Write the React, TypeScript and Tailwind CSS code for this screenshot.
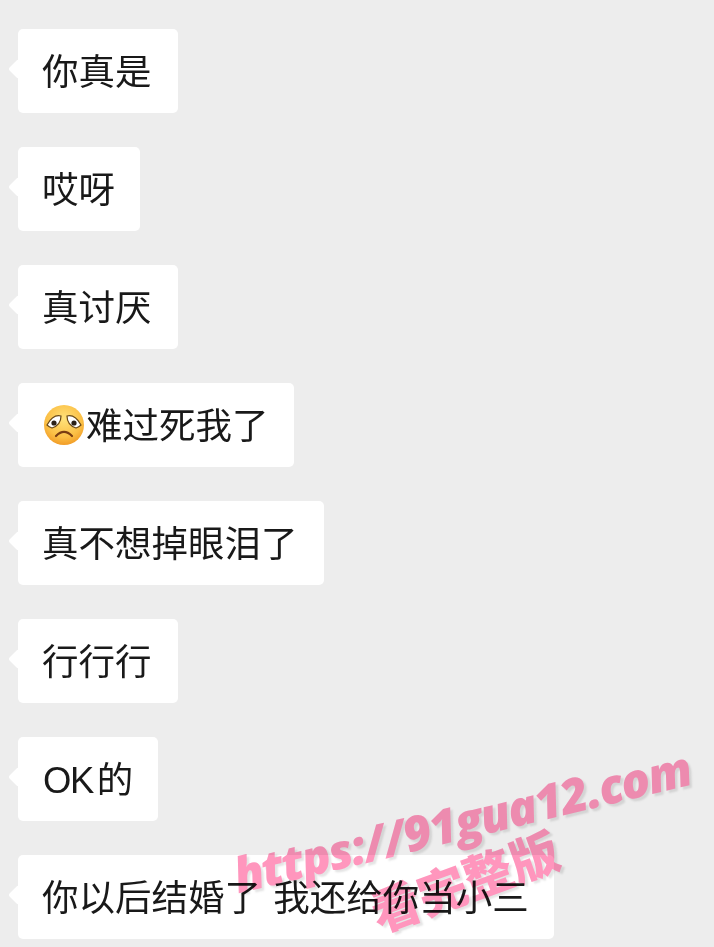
const rows: { w: string; text: string; emoji?: boolean }[] = [
  { w: "w-[160px]", text: "你真是" },
  { w: "w-[122px]", text: "哎呀" },
  { w: "w-[160px]", text: "真讨厌" },
  { w: "w-[276px]", text: "难过死我了", emoji: true },
  { w: "w-[306px]", text: "真不想掉眼泪了" },
  { w: "w-[160px]", text: "行行行" },
  { w: "w-[140px]", text: "OK 的" },
  { w: "w-[536px]", text: "你以后结婚了 我还给你当小三" },
];

function Sad() {
  return (
    <svg width="42" height="42" viewBox="0 0 42 42" className="shrink-0 ml-[1px] mr-[1px] -translate-y-[2px]">
      <defs>
        <radialGradient id="f" cx="50%" cy="35%" r="70%">
          <stop offset="0%" stopColor="#ffe27a" />
          <stop offset="65%" stopColor="#fbbf45" />
          <stop offset="100%" stopColor="#ef9420" />
        </radialGradient>
      </defs>
      <circle cx="21" cy="21" r="20" fill="url(#f)" />
      <path d="M4 21 Q10 10 18 12 Q18 21 9 24 Q6 23 4 21Z" fill="#fff" stroke="#6b4a18" strokeWidth="1.2" />
      <path d="M38 21 Q32 10 24 12 Q24 21 33 24 Q36 23 38 21Z" fill="#fff" stroke="#6b4a18" strokeWidth="1.2" />
      <circle cx="11" cy="19" r="2.6" fill="#2b2118" />
      <circle cx="31" cy="19" r="2.6" fill="#2b2118" />
      <path d="M13 32 Q21 24 29 32" fill="none" stroke="#7a3d12" strokeWidth="2.2" strokeLinecap="round" />
    </svg>
  );
}

export default function App() {
  return (
    <div className="relative w-[714px] h-[947px] overflow-hidden bg-[#ededed] pt-[29px] pl-[18px] flex flex-col gap-[34px] font-['Liberation_Sans','Noto_Sans_CJK_SC',sans-serif] text-[#191919]">
      {rows.map((r, i) => (
        <div
          key={i}
          className={`relative ${r.w} h-[84px] shrink-0 bg-white rounded-[5px] flex items-center pl-[24px] pt-[4px] text-[36.5px] leading-none`}
        >
          <div className="absolute left-[-7px] top-[33px] w-[14px] h-[14px] bg-white rotate-45 rounded-[2px]" />
          <span className="relative flex items-center whitespace-pre [word-spacing:2px]">
            {r.emoji && <Sad />}
            {r.text === "OK 的" ? (
              <>
                <span className="tracking-[-1.5px] ml-[1px]">OK</span>
                <span className="ml-[4px]">的</span>
              </>
            ) : (
              r.text
            )}
          </span>
        </div>
      ))}
      <div className="absolute left-[234px] top-[852px] rotate-[-13.5deg] origin-left text-[48px] tracking-[-1.5px] leading-none font-extrabold italic whitespace-nowrap text-[#ff96bd] mix-blend-multiply font-['Open_Sans',sans-serif] [text-shadow:2px_3px_2px_rgba(120,120,120,0.2)]">
        https://91gua12.com
      </div>
      <div className="absolute left-[372px] top-[888px] rotate-[-20deg] origin-left text-[49px] leading-none font-black whitespace-nowrap text-[#ff96bd] mix-blend-multiply font-['Noto_Sans_CJK_SC',sans-serif] [text-shadow:2px_3px_2px_rgba(120,120,120,0.2)]">
        看完整版
      </div>
    </div>
  );
}
